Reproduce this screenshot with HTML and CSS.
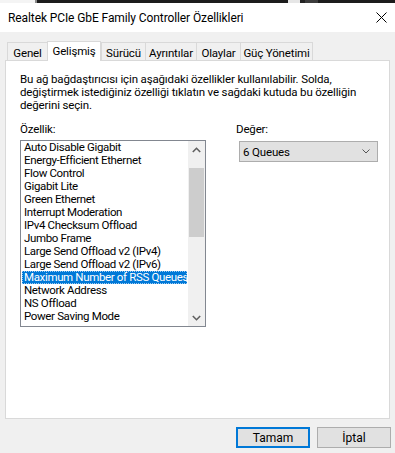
FILE: index.html
```html
<!DOCTYPE html>
<html lang="tr">
<head>
<meta charset="utf-8">
<title>Realtek PCIe GbE Family Controller Özellikleri</title>
<link rel="stylesheet" href="styles.css">
</head>
<body>
<div class="strip"></div>
<div class="titlebar">
  <span class="title">Realtek PCIe GbE Family Controller Özellikleri</span>
  <svg class="close" width="11" height="11" viewBox="0 0 11 11"><path d="M0.5 0.5 L10.5 10.5 M10.5 0.5 L0.5 10.5" stroke="#000" stroke-width="1" fill="none"/></svg>
</div>
<div class="client">
  <div class="tabs">
    <div class="tab t-genel">Genel</div>
    <div class="tab sel t-gelismis">Gelişmiş</div>
    <div class="tab t-surucu">Sürücü</div>
    <div class="tab t-ayrintilar">Ayrıntılar</div>
    <div class="tab t-olaylar">Olaylar</div>
    <div class="tab t-guc">Güç Yönetimi</div>
  </div>
  <div class="panel">
    <p class="desc"><span>Bu ağ bağdaştırıcısı için aşağıdaki özellikler kullanılabilir. Solda,</span><span>değiştirmek istediğiniz özelliği tıklatın ve sağdaki kutuda bu özelliğin</span><span>değerini seçin.</span></p>
    <div class="props">
      <div class="col-left">
        <div class="lbl">Özellik:</div>
        <div class="listbox">
          <ul class="items">
            <li>Auto Disable Gigabit</li>
            <li>Energy-Efficient Ethernet</li>
            <li>Flow Control</li>
            <li>Gigabit Lite</li>
            <li>Green Ethernet</li>
            <li>Interrupt Moderation</li>
            <li>IPv4 Checksum Offload</li>
            <li>Jumbo Frame</li>
            <li>Large Send Offload v2 (IPv4)</li>
            <li>Large Send Offload v2 (IPv6)</li>
            <li class="selected">Maximum Number of RSS Queues</li>
            <li>Network Address</li>
            <li>NS Offload</li>
            <li>Power Saving Mode</li>
          </ul>
          <div class="scrollbar">
            <div class="sb-btn"><svg width="9" height="6" viewBox="0 0 9 6"><path d="M0.8 5 L4.5 1.3 L8.2 5" stroke="#606060" stroke-width="1.6" fill="none"/></svg></div>
            <div class="sb-track"><div class="sb-thumb"></div></div>
            <div class="sb-btn"><svg width="9" height="6" viewBox="0 0 9 6"><path d="M0.8 1 L4.5 4.7 L8.2 1" stroke="#606060" stroke-width="1.6" fill="none"/></svg></div>
          </div>
        </div>
      </div>
      <div class="col-right">
        <div class="lbl">Değer:</div>
        <div class="combo">
          <span>6 Queues</span>
          <svg width="8" height="5" viewBox="0 0 8 5"><path d="M0.5 0.5 L4 4 L7.5 0.5" stroke="#555" stroke-width="1" fill="none"/></svg>
        </div>
      </div>
    </div>
  </div>
  <div class="buttons">
    <button class="btn default">Tamam</button>
    <button class="btn">İptal</button>
  </div>
</div>
</body>
</html>
```
FILE: styles.css
```css
* { box-sizing: border-box; }
html, body { margin: 0; padding: 0; }
body {
  width: 395px;
  height: 453px;
  overflow: hidden;
  background: #f0f0f0;
  font-family: Roboto, "Liberation Sans", sans-serif;
  font-size: 11.5px;
  letter-spacing: -0.15px;
  color: #000;
}
.strip {
  height: 3px;
  background: linear-gradient(to right, #f4f4f4 0 35px, #8a8a8a 35px 37px, #1c1c1c 37px 288px, #e6e6e6 288px 300px, #232323 300px 305px, #3c3c3c 305px 318px, #1c1c1c 318px);
}
.titlebar {
  height: 29px;
  background: #fff;
  display: flex;
  align-items: center;
  justify-content: space-between;
  padding: 0 8px 0 8px;
}
.title { font-size: 12px; letter-spacing: -0.1px; }
.close { display: block; }
.client {
  padding: 9px 0 0 5px;
}
.tabs {
  display: flex;
  align-items: flex-end;
  height: 20px;
  margin-bottom: -1px;
  padding-left: 2px;
  position: relative;
  z-index: 1;
}
.tab {
  height: 18px;
  margin-bottom: 1px;
  border: 1px solid #d9d9d9;
  border-bottom: none;
  background: #f0f0f0;
  display: flex;
  justify-content: center;
  align-items: center;
  padding-top: 2px;
  white-space: nowrap;
}
.tab.sel {
  height: 20px;
  margin-bottom: 0;
  background: #fff;
  padding-top: 0;
  padding-bottom: 2px;
}
.t-genel { width: 41px; }
.t-gelismis { width: 54px; margin-left: -1px; }
.t-surucu { width: 45px; margin-left: 0; }
.t-ayrintilar { width: 52px; margin-left: -1px; }
.t-olaylar { width: 45px; margin-left: -1px; }
.t-guc { width: 73px; margin-left: -1px; }
.panel {
  width: 385px;
  height: 359px;
  background: #fff;
  border: 1px solid #d9d9d9;
  padding: 12px 0 0 14px;
}
.desc {
  margin: 0;
  line-height: 13px;
}
.desc span { display: block; white-space: nowrap; }
.props {
  display: flex;
  margin-top: 11px;
}
.lbl { line-height: 13px; height: 13px; }
.col-left .lbl { margin-bottom: 4px; }
.col-right { margin-left: 30px; }
.col-right .lbl { margin-bottom: 5px; }
.listbox {
  width: 186px;
  height: 187px;
  border: 1px solid #828790;
  display: flex;
  overflow: hidden;
}
.items {
  list-style: none;
  margin: 0;
  padding: 0;
  width: 167px;
  overflow: hidden;
}
.items li {
  height: 13px;
  line-height: 13px;
  padding-left: 3px;
  white-space: nowrap;
  letter-spacing: -0.35px;
}
.items li.selected {
  background: #0078d7;
  color: #fff;
  margin: 0 1px;
  padding-left: 2px;
  outline: 1px dotted #9ccbf2;
  outline-offset: -1px;
}
.scrollbar {
  width: 17px;
  background: #f0f0f0;
  display: flex;
  flex-direction: column;
}
.sb-btn {
  height: 17px;
  display: flex;
  align-items: center;
  justify-content: center;
}
.sb-track { flex: 1; }
.sb-thumb {
  margin: 10px 0 0 1px;
  width: 15px;
  height: 69px;
  background: #cdcdcd;
}
.combo {
  margin-left: 3px;
  width: 139px;
  height: 21px;
  background: #e1e1e1;
  border: 1px solid #adadad;
  display: flex;
  align-items: center;
  justify-content: space-between;
  padding: 0 7px 0 3px;
}
.combo svg { display: block; }
.buttons {
  display: flex;
  justify-content: flex-end;
  gap: 7px;
  padding-right: 4px;
  margin-top: 8px;
}
.btn {
  width: 74px;
  height: 21px;
  font-family: inherit;
  font-size: 12px;
  letter-spacing: 0;
  color: #000;
  background: #e1e1e1;
  border: 1px solid #adadad;
  padding: 0;
  margin: 0;
  border-radius: 0;
}
.btn.default { border: 2px solid #0078d7; }
```
